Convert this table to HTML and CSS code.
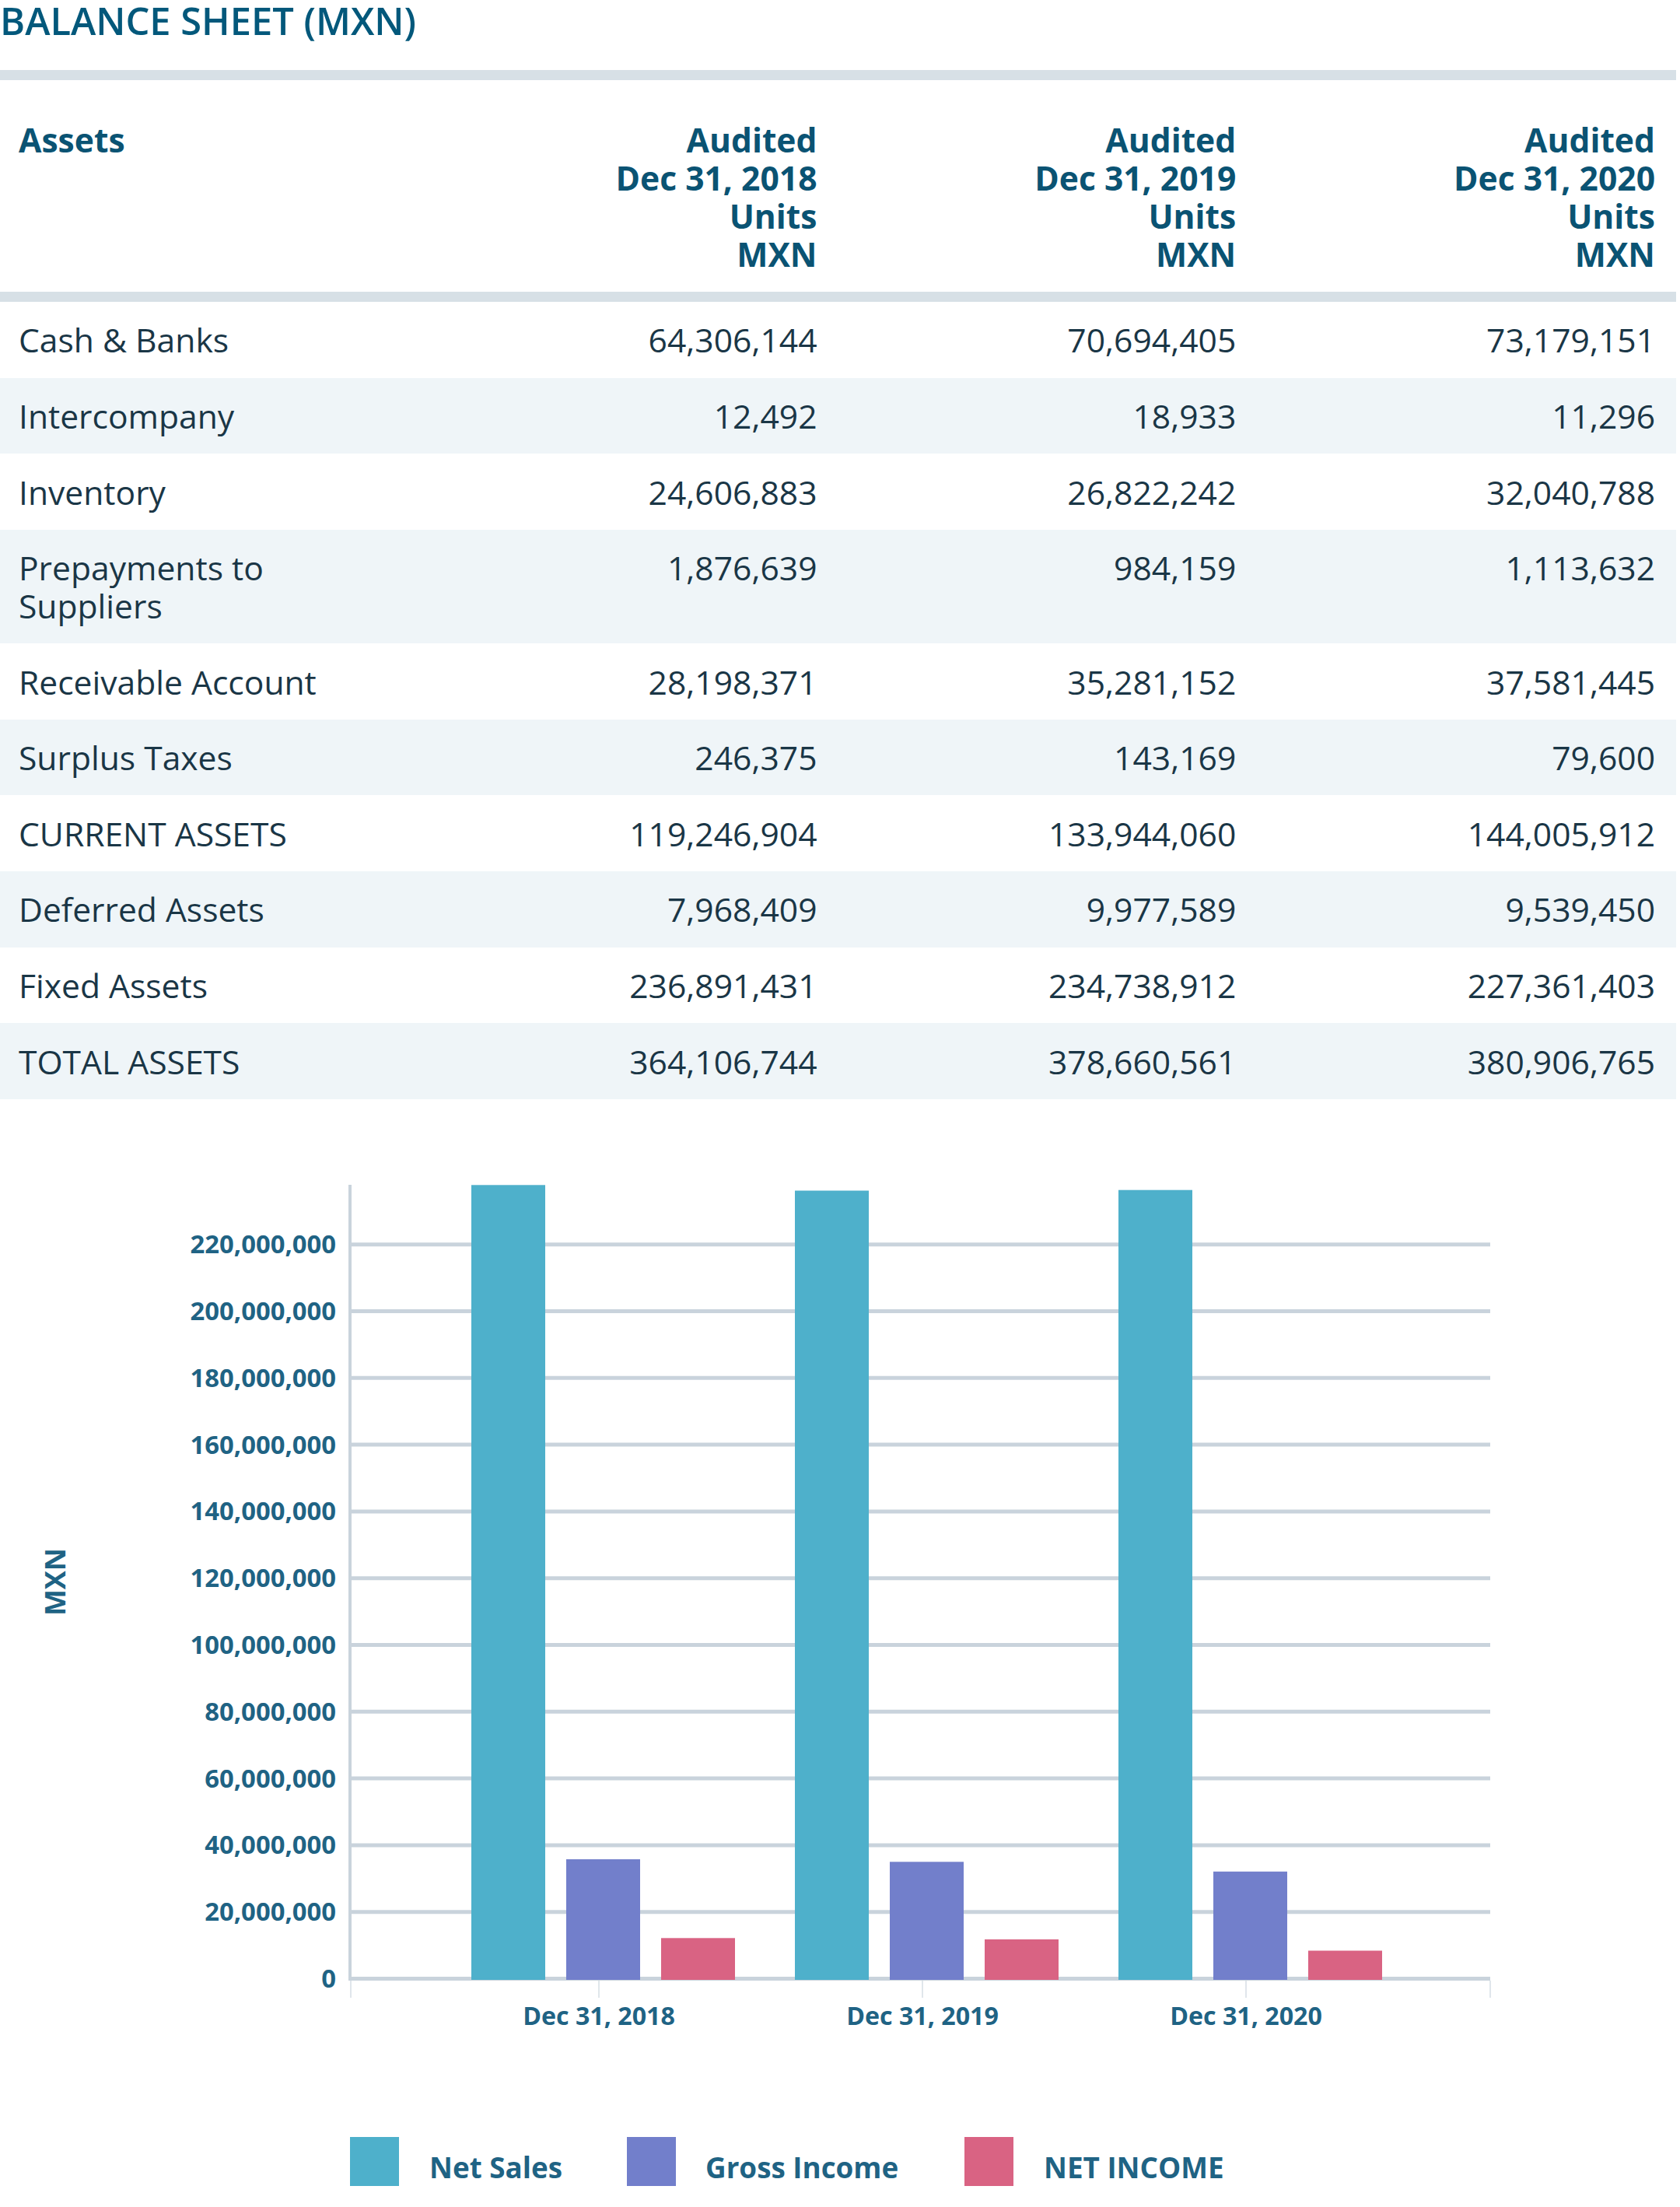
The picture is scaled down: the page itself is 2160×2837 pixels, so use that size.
FILE: index.html
```html
<!DOCTYPE html>
<html lang="en">
<head>
<meta charset="utf-8">
<title>Balance Sheet (MXN)</title>
<link rel="stylesheet" href="styles.css">
</head>
<body>
<div class="page">
  <h1 class="title">BALANCE SHEET (MXN)</h1>
  <table class="sheet">
    <colgroup><col><col><col><col></colgroup>
    <thead>
      <tr>
        <th class="label-col">Assets</th>
        <th>Audited<br>Dec 31, 2018<br>Units<br>MXN</th>
        <th>Audited<br>Dec 31, 2019<br>Units<br>MXN</th>
        <th>Audited<br>Dec 31, 2020<br>Units<br>MXN</th>
      </tr>
    </thead>
    <tbody>
      <tr><td class="label-col">Cash &amp; Banks</td><td>64,306,144</td><td>70,694,405</td><td>73,179,151</td></tr>
      <tr class="alt"><td class="label-col">Intercompany</td><td>12,492</td><td>18,933</td><td>11,296</td></tr>
      <tr><td class="label-col">Inventory</td><td>24,606,883</td><td>26,822,242</td><td>32,040,788</td></tr>
      <tr class="alt"><td class="label-col">Prepayments to Suppliers</td><td>1,876,639</td><td>984,159</td><td>1,113,632</td></tr>
      <tr><td class="label-col">Receivable Account</td><td>28,198,371</td><td>35,281,152</td><td>37,581,445</td></tr>
      <tr class="alt"><td class="label-col">Surplus Taxes</td><td>246,375</td><td>143,169</td><td>79,600</td></tr>
      <tr><td class="label-col">CURRENT ASSETS</td><td>119,246,904</td><td>133,944,060</td><td>144,005,912</td></tr>
      <tr class="alt"><td class="label-col">Deferred Assets</td><td>7,968,409</td><td>9,977,589</td><td>9,539,450</td></tr>
      <tr><td class="label-col">Fixed Assets</td><td>236,891,431</td><td>234,738,912</td><td>227,361,403</td></tr>
      <tr class="alt"><td class="label-col">TOTAL ASSETS</td><td>364,106,744</td><td>378,660,561</td><td>380,906,765</td></tr>
    </tbody>
  </table>

  <svg class="chart" width="2160" height="1424" viewBox="0 1413 2160 1424" xmlns="http://www.w3.org/2000/svg">
    <g class="grid">
      <line x1="452" y1="2457.7" x2="1916" y2="2457.7"/>
      <line x1="452" y1="2371.9" x2="1916" y2="2371.9"/>
      <line x1="452" y1="2286.1" x2="1916" y2="2286.1"/>
      <line x1="452" y1="2200.3" x2="1916" y2="2200.3"/>
      <line x1="452" y1="2114.5" x2="1916" y2="2114.5"/>
      <line x1="452" y1="2028.7" x2="1916" y2="2028.7"/>
      <line x1="452" y1="1942.9" x2="1916" y2="1942.9"/>
      <line x1="452" y1="1857.1" x2="1916" y2="1857.1"/>
      <line x1="452" y1="1771.3" x2="1916" y2="1771.3"/>
      <line x1="452" y1="1685.5" x2="1916" y2="1685.5"/>
      <line x1="452" y1="1599.7" x2="1916" y2="1599.7"/>
      <line x1="448" y1="2543.5" x2="1916" y2="2543.5"/>
    </g>
    <line class="axis" x1="450" y1="1523" x2="450" y2="2546"/>
    <g class="ticks">
      <line x1="451" y1="2546" x2="451" y2="2568"/>
      <line x1="770" y1="2546" x2="770" y2="2568"/>
      <line x1="1186" y1="2546" x2="1186" y2="2568"/>
      <line x1="1602" y1="2546" x2="1602" y2="2568"/>
      <line x1="1916" y1="2546" x2="1916" y2="2568"/>
    </g>
    <g class="ylabels">
      <text x="432" y="2555">0</text>
      <text x="432" y="2469.2">20,000,000</text>
      <text x="432" y="2383.4">40,000,000</text>
      <text x="432" y="2297.6">60,000,000</text>
      <text x="432" y="2211.8">80,000,000</text>
      <text x="432" y="2126">100,000,000</text>
      <text x="432" y="2040.2">120,000,000</text>
      <text x="432" y="1954.4">140,000,000</text>
      <text x="432" y="1868.6">160,000,000</text>
      <text x="432" y="1782.8">180,000,000</text>
      <text x="432" y="1697">200,000,000</text>
      <text x="432" y="1611.2">220,000,000</text>
    </g>
    <text class="ytitle" transform="translate(84 2033.5) rotate(-90)">MXN</text>
    <g class="bars">
      <rect class="s-net" x="606" y="1523.3" width="95" height="1021.7"/>
      <rect class="s-gross" x="728" y="2390" width="95" height="155"/>
      <rect class="s-income" x="850" y="2491.3" width="95" height="53.7"/>
      <rect class="s-net" x="1022" y="1530.5" width="95" height="1014.5"/>
      <rect class="s-gross" x="1144" y="2393.3" width="95" height="151.7"/>
      <rect class="s-income" x="1266" y="2493" width="95" height="52"/>
      <rect class="s-net" x="1438" y="1529.7" width="95" height="1015.3"/>
      <rect class="s-gross" x="1560" y="2405.8" width="95" height="139.2"/>
      <rect class="s-income" x="1682" y="2507.5" width="95" height="37.5"/>
    </g>
    <g class="xlabels">
      <text x="770" y="2603">Dec 31, 2018</text>
      <text x="1186" y="2603">Dec 31, 2019</text>
      <text x="1602" y="2603">Dec 31, 2020</text>
    </g>
    <g class="legend">
      <rect class="s-net" x="450" y="2747" width="63" height="63"/>
      <text x="552" y="2800">Net Sales</text>
      <rect class="s-gross" x="806" y="2747" width="63" height="63"/>
      <text x="907" y="2800">Gross Income</text>
      <rect class="s-income" x="1240" y="2747" width="63" height="63"/>
      <text x="1342" y="2800">NET INCOME</text>
    </g>
  </svg>
</div>
</body>
</html>
```

FILE: styles.css
```css
html, body {
  margin: 0;
  padding: 0;
  background: #ffffff;
}

.page {
  width: 2155px;
  font-family: "Open Sans", "Noto Sans", sans-serif;
}

.title {
  margin: 0 0 38px 0;
  font-size: 48.8px;
  line-height: 52px;
  font-weight: 600;
  color: #03587b;
  letter-spacing: 0;
}

.sheet {
  width: 2155px;
  table-layout: fixed;
  border-collapse: collapse;
  border-spacing: 0;
}

.sheet th {
  font-size: 42.6px;
  line-height: 49px;
  font-weight: 700;
  color: #0a5373;
  text-align: right;
  vertical-align: top;
  padding: 51.6px 27px 24.4px 25px;
  border-top: 13px solid #d7e0e6;
  border-bottom: 13px solid #d7e0e6;
}

.sheet td {
  font-size: 42.6px;
  line-height: 49px;
  font-weight: 400;
  color: #1a3646;
  text-align: right;
  vertical-align: top;
  padding: 24.4px 27px 24.2px 25px;
}

.sheet .label-col {
  text-align: left;
  padding-left: 24px;
}

.sheet .alt td {
  background: #eff5f8;
}

.chart {
  display: block;
  font-family: "Open Sans", "Noto Sans", sans-serif;
}

.grid line {
  stroke: #c9d3dc;
  stroke-width: 5;
}

.axis {
  stroke: #c9d3dc;
  stroke-width: 4;
}

.ticks line {
  stroke: #e0e6eb;
  stroke-width: 2;
}

.ylabels text {
  font-size: 32.8px;
  font-weight: 700;
  fill: #1f6384;
  text-anchor: end;
}

.xlabels text {
  font-size: 32.2px;
  font-weight: 700;
  fill: #1f6384;
  text-anchor: middle;
}

.ytitle {
  font-size: 36px;
  font-weight: 700;
  fill: #1f6384;
  text-anchor: middle;
}

.legend text {
  font-size: 36.8px;
  font-weight: 700;
  fill: #1f6384;
}

.s-net { fill: #4eb0cb; }
.s-gross { fill: #727fcb; }
.s-income { fill: #d96383; }
```
